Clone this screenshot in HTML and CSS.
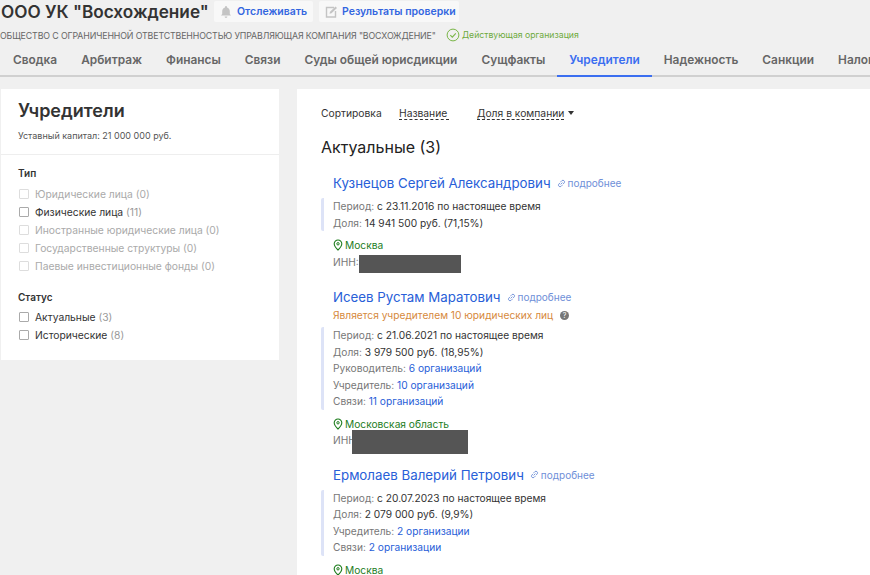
FILE: index.html
```html
<!DOCTYPE html>
<html lang="ru">
<head>
<meta charset="utf-8">
<title>ООО УК "Восхождение"</title>
<link rel="stylesheet" href="styles.css">
</head>
<body>
<header class="head">
  <div class="title-row">
    <h1 class="title">ООО УК "Восхождение"</h1>
    <a class="action action-first"><svg class="action-icon" viewBox="0 0 14 14"><path d="M7 1a1 1 0 0 1 1 1v.4c1.800.5 2.800 2 2.800 3.800V9l1.200 1.600H2L3.200 9V6.200C3.200 4.400 4.200 2.900 6 2.400V2a1 1 0 0 1 1-1zM5.600 11.500h2.800A1.400 1.400 0 0 1 5.600 11.500z" fill="#c4c4c4"/></svg>Отслеживать</a>
    <a class="action"><svg class="action-icon" viewBox="0 0 14 14"><path d="M10 2.500H2.500v9.500h9V6" fill="none" stroke="#c4c4c4" stroke-width="1.400"/><path d="M5.500 8.800l.5-2 5.500-5.300 1.500 1.500-5.500 5.300z" fill="#c4c4c4"/></svg>Результаты проверки</a>
  </div>
  <div class="sub-row">
    <span class="full-name">ОБЩЕСТВО С ОГРАНИЧЕННОЙ ОТВЕТСТВЕННОСТЬЮ УПРАВЛЯЮЩАЯ КОМПАНИЯ "ВОСХОЖДЕНИЕ"</span>
    <span class="status"><svg class="status-icon" viewBox="0 0 14 14"><circle cx="7" cy="7" r="5.900" fill="none" stroke="#7ab648" stroke-width="1"/><path d="M4.300 7.200l2 2 3.500-3.800" fill="none" stroke="#7ab648" stroke-width="1.100"/></svg>Действующая организация</span>
  </div>
  <nav class="tabs">
    <a class="tab">Сводка</a>
    <a class="tab">Арбитраж</a>
    <a class="tab">Финансы</a>
    <a class="tab">Связи</a>
    <a class="tab">Суды общей юрисдикции</a>
    <a class="tab">Сущфакты</a>
    <a class="tab tab-active">Учредители</a>
    <a class="tab">Надежность</a>
    <a class="tab">Санкции</a>
    <a class="tab">Налоги</a>
  </nav>
</header>
<div class="layout">
  <aside class="side">
    <div class="side-top">
      <h2 class="side-title">Учредители</h2>
      <p class="capital">Уставный капитал: 21 000 000 руб.</p>
    </div>
    <div class="filters">
      <h3 class="filter-title">Тип</h3>
      <div class="check check-off"><i class="box"></i><span>Юридические лица <em>(0)</em></span></div>
      <div class="check"><i class="box"></i><span>Физические лица <em>(11)</em></span></div>
      <div class="check check-off"><i class="box"></i><span>Иностранные юридические лица <em>(0)</em></span></div>
      <div class="check check-off"><i class="box"></i><span>Государственные структуры <em>(0)</em></span></div>
      <div class="check check-off"><i class="box"></i><span>Паевые инвестиционные фонды <em>(0)</em></span></div>
      <h3 class="filter-title filter-title-next">Статус</h3>
      <div class="check"><i class="box"></i><span>Актуальные <em>(3)</em></span></div>
      <div class="check"><i class="box"></i><span>Исторические <em>(8)</em></span></div>
    </div>
  </aside>
  <main class="main">
    <div class="sort">
      <span class="sort-label">Сортировка</span>
      <a class="sort-link">Название</a>
      <a class="sort-link sort-second">Доля в компании</a>
      <span class="caret"></span>
    </div>
    <h2 class="group">Актуальные (3)</h2>

    <article class="person">
      <div class="name-row"><a class="name">Кузнецов Сергей Александрович</a><a class="more"><svg class="link-icon" viewBox="0 0 12 12"><path d="M5 7l2-2M4.500 5.200L3 6.700a1.800 1.800 0 0 0 2.500 2.500L7 7.700M5 4.300l1.500-1.500A1.800 1.800 0 0 1 9 5.300L7.500 6.800" fill="none" stroke="#6f8fd8" stroke-width="1"/></svg>подробнее</a></div>
      <div class="facts">
        <div class="fact">Период: <b>с 23.11.2016 по настоящее время</b></div>
        <div class="fact">Доля: <b>14 941 500 руб. (71,15%)</b></div>
      </div>
      <div class="region"><svg class="pin" viewBox="0 0 10 12"><path d="M5 1a3.800 3.800 0 0 1 3.800 3.800C8.800 7.500 5 11 5 11S1.200 7.500 1.200 4.800A3.800 3.800 0 0 1 5 1z" fill="none" stroke="#1c7c1c" stroke-width="1.100"/><circle cx="5" cy="4.800" r="1.200" fill="none" stroke="#1c7c1c" stroke-width="1"/></svg>Москва</div>
      <div class="inn inn-first">ИНН:<span class="redact redact-a"></span></div>
    </article>

    <article class="person person-b">
      <div class="name-row"><a class="name">Исеев Рустам Маратович</a><a class="more"><svg class="link-icon" viewBox="0 0 12 12"><path d="M5 7l2-2M4.500 5.200L3 6.700a1.800 1.800 0 0 0 2.500 2.500L7 7.700M5 4.300l1.500-1.500A1.800 1.800 0 0 1 9 5.300L7.500 6.800" fill="none" stroke="#6f8fd8" stroke-width="1"/></svg>подробнее</a></div>
      <div class="note">Является учредителем 10 юридических лиц<span class="hint">?</span></div>
      <div class="facts">
        <div class="fact">Период: <b>с 21.06.2021 по настоящее время</b></div>
        <div class="fact">Доля: <b>3 979 500 руб. (18,95%)</b></div>
        <div class="fact">Руководитель: <a class="org">6 организаций</a></div>
        <div class="fact">Учредитель: <a class="org">10 организаций</a></div>
        <div class="fact">Связи: <a class="org">11 организаций</a></div>
      </div>
      <div class="region"><svg class="pin" viewBox="0 0 10 12"><path d="M5 1a3.800 3.800 0 0 1 3.800 3.800C8.800 7.500 5 11 5 11S1.200 7.500 1.200 4.800A3.800 3.800 0 0 1 5 1z" fill="none" stroke="#1c7c1c" stroke-width="1.100"/><circle cx="5" cy="4.800" r="1.200" fill="none" stroke="#1c7c1c" stroke-width="1"/></svg>Московская область</div>
      <div class="inn">ИНН<span class="redact redact-b"></span></div>
    </article>

    <article class="person person-c">
      <div class="name-row"><a class="name">Ермолаев Валерий Петрович</a><a class="more"><svg class="link-icon" viewBox="0 0 12 12"><path d="M5 7l2-2M4.500 5.200L3 6.700a1.800 1.800 0 0 0 2.500 2.500L7 7.700M5 4.300l1.500-1.500A1.800 1.800 0 0 1 9 5.300L7.500 6.800" fill="none" stroke="#6f8fd8" stroke-width="1"/></svg>подробнее</a></div>
      <div class="facts">
        <div class="fact">Период: <b>с 20.07.2023 по настоящее время</b></div>
        <div class="fact">Доля: <b>2 079 000 руб. (9,9%)</b></div>
        <div class="fact">Учредитель: <a class="org">2 организации</a></div>
        <div class="fact">Связи: <a class="org">2 организации</a></div>
      </div>
      <div class="region"><svg class="pin" viewBox="0 0 10 12"><path d="M5 1a3.800 3.800 0 0 1 3.800 3.800C8.800 7.500 5 11 5 11S1.200 7.500 1.200 4.800A3.800 3.800 0 0 1 5 1z" fill="none" stroke="#1c7c1c" stroke-width="1.100"/><circle cx="5" cy="4.800" r="1.200" fill="none" stroke="#1c7c1c" stroke-width="1"/></svg>Москва</div>
    </article>
  </main>
</div>
</body>
</html>
```
FILE: styles.css
```css
html, body {
  margin: 0;
  height: 575px;
  overflow: hidden;
  background: #f0f0f0;
}
body {
  font-family: Inter, "Noto Sans", sans-serif;
  color: #333;
  width: 870px;
}
h1, h2, h3, p { margin: 0; }
em { font-style: normal; }

.head { height: 89px; box-sizing: border-box; padding-top: 1px; }
.title-row { display: flex; align-items: center; height: 21px; padding-left: 1px; white-space: nowrap; }
.title { font-size: 17.200px; font-weight: 600; color: #333; width: 213px; }
.action {
  display: flex; align-items: center; height: 21px; margin-right: 6px; padding: 0 2px 0 5px; box-sizing: border-box; width: 140px;
  background: #f8f8f8; border-radius: 2px; color: #3366e0; font-size: 10.500px; font-weight: 600;
}
.action-first { width: 99px; }
.action-icon { width: 14px; height: 14px; margin-right: 4px; flex: none; }
.sub-row { display: flex; align-items: center; height: 12px; margin-top: 7px; white-space: nowrap; font-size: 8.800px; color: #666; }
.full-name { width: 446px; letter-spacing: -.12px; }
.status { display: flex; align-items: center; color: #6eaa3c; font-size: 8.700px; }
.status-icon { width: 14px; height: 14px; margin-right: 2px; }

.tabs {
  display: flex; height: 34px; margin-top: 2px; padding-left: 1px; box-sizing: border-box; white-space: nowrap;
  border-bottom: 2px solid #d0d0d0;
}
.tab {
  height: 34px; box-sizing: border-box; padding: 9px 12px 0; font-size: 11.880px; font-weight: 600; color: #666;
}
.tab-active { color: #3b6ef0; border-bottom: 2px solid #3b6ef0; }

.layout { display: flex; align-items: flex-start; padding-left: 1px; }
.side { width: 278px; height: 271px; background: #fff; margin-right: 18px; flex: none; }
.side-top { height: 66px; box-sizing: border-box; padding: 11px 17px 0; border-bottom: 1px solid #eee; }
.side-title { font-size: 18px; font-weight: 600; color: #333; line-height: 21px; }
.capital { font-size: 9px; color: #555; margin-top: 9px; line-height: 12px; }
.filters { padding: 11px 17px 0; }
.filter-title { font-size: 10px; font-weight: 600; color: #333; line-height: 14px; margin-bottom: 5px; }
.filter-title-next { margin-top: 15px; margin-bottom: 4px; }
.check { display: flex; align-items: center; height: 18px; font-size: 10.300px; color: #333; white-space: nowrap; }
.check em { color: #999; }
.box { width: 8px; height: 8px; border: 1px solid #aaa; border-radius: 1px; margin: 0 6px 0 1px; flex: none; }
.check-off { color: #aaa; }
.check-off em { color: #aaa; }
.check-off .box { border-color: #ddd; }

.main { flex: 1; background: #fff; box-sizing: border-box; padding: 16px 0 0 24px; overflow: hidden; height: 486px; }
.sort { display: flex; align-items: center; height: 16px; font-size: 10.300px; color: #333; white-space: nowrap; }
.sort-label { width: 78px; }
.sort-link { border-bottom: 1px dashed #333; line-height: 12px; margin-top: 1px; width: 50px; }
.sort-second { margin-left: 28px; width: 87px; }
.caret { width: 0; height: 0; border: 3px solid transparent; border-top: 4px solid #333; border-bottom: 0; margin-left: 4px; }
.group { font-size: 16px; font-weight: 400; color: #222; line-height: 20px; margin-top: 16px; margin-bottom: 16px; }

.person { color: #777; font-size: 10.200px; }
.person-b { margin-top: 16px; }
.person-c { margin-top: 16px; }
.name-row { display: flex; align-items: center; height: 20px; padding-left: 12px; white-space: nowrap; }
.name { color: #2860d8; font-size: 13.300px; }
.more { display: flex; align-items: center; margin-left: 5px; color: #6f8fd8; font-size: 10px; }
.link-icon { width: 11px; height: 11px; margin-right: 1px; }
.note { color: #d6893c; height: 15px; line-height: 16px; padding-left: 12px; white-space: nowrap; }
.hint {
  display: inline-block; width: 9px; height: 9px; margin-left: 7px; border-radius: 50%; background: #777; color: #fff;
  font-size: 7px; line-height: 9px; text-align: center; vertical-align: 1px;
}
.facts { margin-top: 5px; padding-left: 9px; border-left: 3px solid #dde3f7; border-radius: 2px; }
.fact { height: 16.500px; line-height: 16.500px; white-space: nowrap; color: #777; }
.fact b { font-weight: 400; color: #333; }
.org { color: #2860d8; }
.region { display: flex; align-items: center; height: 16px; margin-top: 6px; padding-left: 12px; color: #1c7c1c; white-space: nowrap; }
.pin { width: 10px; height: 12px; margin-right: 2px; }
.inn { position: relative; height: 17px; line-height: 17px; padding-left: 12px; color: #777; white-space: nowrap; }
.inn-first { margin-top: 1px; }
.redact { position: absolute; background: #555; }
.redact-a { left: 38px; top: 1px; width: 102px; height: 18px; }
.redact-b { left: 31px; top: -2px; width: 116px; height: 24px; }
```
